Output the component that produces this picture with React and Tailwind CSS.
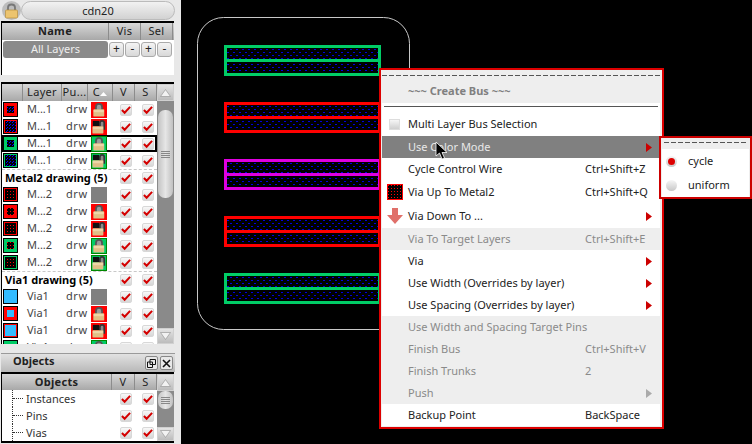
import React from 'react';

const RED = '#ff0000';
const GREEN = '#00cc66';
const VIA = '#33bbff';

// Layer colour chip: small = inset square, full = thin ring round the fill
const Swatch = ({ color, kind, fill }) => {
  if (!kind) {
    return (
      <svg width="15" height="15" className="block shrink-0">
        <rect width="15" height="15" fill="#000" />
        <rect x="1" y="1" width="13" height="13" fill={color} />
      </svg>
    );
  }
  const inset = kind === 'small' ? 4 : 2;
  const size = 15 - inset * 2;
  return (
    <svg width="15" height="15" className="block shrink-0" shapeRendering="crispEdges">
      <rect width="15" height="15" fill="#000" />
      <rect x="1" y="1" width="13" height="13" fill={color} />
      <rect x={inset} y={inset} width={size} height={size} fill={fill} />
    </svg>
  );
};

const LockIcon = ({ open }) => (
  <svg width="14" height="14" viewBox="0 0 16 16" className="block">
    {open && <rect x="1" y="1" width="7" height="6" fill="#111" />}
    {open ? (
      <path d="M9 8V3.500C9 2 10 1 11.500 1S14 2 14 3.500V11" fill="#8a8a8a" stroke="#333" strokeWidth="2" />
    ) : (
      <path d="M4.500 8V4.500C4.500 2.500 6 1 8 1s3.500 1.500 3.500 3.500V8" fill="#9a9a9a" stroke="#555" strokeWidth="2" />
    )}
    <rect x={open ? 0.5 : 1.5} y="7" width="12.500" height="8.500" rx="1" fill="#e0bf86" />
    <rect x={open ? 1 : 2} y="8" width="11.500" height="2.500" fill="#edd6a8" />
  </svg>
);

const ColorCell = ({ bg, edge, open, blank }) => {
  if (blank) return <div className="w-4 h-4 bg-[#808080]" />;
  return (
    <div className={`w-4 h-4 border flex items-center justify-center ${edge} ${bg}`}>
      <LockIcon open={open} />
    </div>
  );
};

const Check = () => (
  <div className="w-3 h-3 bg-linear-to-b from-[#f8f8f8] to-[#d6d6d6] border border-[#d8d8d8] rounded-[2px] flex items-center justify-center">
    <svg width="11" height="10" viewBox="0 0 11 10" className="block">
      <path d="M1 5l3 3 6-6.500" fill="none" stroke="#d40000" strokeWidth="2.200" />
    </svg>
  </div>
);

const HeadCell = ({ w, bold, children }) => (
  <div
    className={`h-full shrink-0 flex items-center justify-center border-r border-[#8c8c8c] text-[11px] tracking-[0.3px] text-[#222] ${bold ? 'font-bold' : ''}`}
    style={{ width: w }}
  >
    {children}
  </div>
);

const ScrollBtn = ({ up, h = 'h-[17px]' }) => (
  <div className={`${h} shrink-0 bg-linear-to-b from-[#e4e4e4] to-[#bcbcbc] border border-[#d0d0d0] flex items-center justify-center`}>
    <svg width="11" height="8" viewBox="0 0 11 8" className="block">
      <path d={up ? 'M5.500 0.500L10.500 7.500H0.500Z' : 'M0.500 0.500H10.500L5.500 7.500Z'} fill="#f2f2f2" stroke="#999" strokeWidth="0.700" />
    </svg>
  </div>
);

const Grip = () => (
  <div className="flex flex-col gap-px w-[9px]">
    <div className="h-px bg-[#888]" />
    <div className="h-px bg-[#888]" />
    <div className="h-px bg-[#888]" />
    <div className="h-px bg-[#888]" />
  </div>
);

const Scrollbar = ({ padTop, thumb, downH }) => (
  <div className="w-[17px] shrink-0 flex flex-col bg-[#8a8a8a]">
    <ScrollBtn up />
    <div className="flex-1 px-px" style={{ paddingTop: padTop }}>
      <div
        className="rounded-[7px] bg-linear-to-r from-[#c4c4c4] via-[#e6e6e6] to-[#c0c0c0] flex items-center justify-center"
        style={{ height: thumb }}
      >
        <Grip />
      </div>
    </div>
    <ScrollBtn h={downH} />
  </div>
);

const layerRow = (name, swatch, cell, selected) => ({ name, swatch, cell, selected });

const blueDots = 'url(#dotsBlue)';
const redDots = 'url(#dotsRed)';

const layerRows = [
  layerRow('M...1', { color: RED, kind: 'small', fill: blueDots }, { bg: 'bg-[#ff0000]', edge: 'border-[#ff0000]' }),
  layerRow('M...1', { color: RED, kind: 'full', fill: blueDots }, { bg: 'bg-[#ff0000]', edge: 'border-[#ff0000]', open: true }),
  layerRow('M...1', { color: GREEN, kind: 'small', fill: blueDots }, { bg: 'bg-[#00cc66]', edge: 'border-[#008800]' }, true),
  layerRow('M...1', { color: GREEN, kind: 'full', fill: blueDots }, { bg: 'bg-[#00cc66]', edge: 'border-[#008800]', open: true }),
  { group: 'Metal2 drawing (5)' },
  layerRow('M...2', { color: RED, kind: 'full', fill: redDots }, { blank: true }),
  layerRow('M...2', { color: RED, kind: 'small', fill: redDots }, { bg: 'bg-[#ff0000]', edge: 'border-[#ff0000]' }),
  layerRow('M...2', { color: RED, kind: 'full', fill: redDots }, { bg: 'bg-[#ff0000]', edge: 'border-[#ff0000]', open: true }),
  layerRow('M...2', { color: GREEN, kind: 'small', fill: redDots }, { bg: 'bg-[#00cc66]', edge: 'border-[#008800]' }),
  layerRow('M...2', { color: GREEN, kind: 'full', fill: redDots }, { bg: 'bg-[#00cc66]', edge: 'border-[#008800]', open: true }),
  { group: 'Via1 drawing (5)' },
  layerRow('Via1', { color: VIA }, { blank: true }),
  layerRow('Via1', { color: RED, kind: 'small', fill: VIA }, { bg: 'bg-[#ff0000]', edge: 'border-[#ff0000]' }),
  layerRow('Via1', { color: RED, kind: 'full', fill: VIA }, { bg: 'bg-[#ff0000]', edge: 'border-[#ff0000]', open: true }),
  layerRow('Via1', { color: GREEN, kind: 'small', fill: VIA }, { bg: 'bg-[#00cc66]', edge: 'border-[#008800]' }),
];

const LayerPanel = () => (
  <div className="mt-[7px] ml-px w-[173px] h-[262px] border-t-2 border-l border-black flex overflow-hidden bg-white">
    <div className="w-[155px] shrink-0 flex flex-col">
      <div className="h-[17px] shrink-0 flex bg-linear-to-b from-[#d8d8d8] to-[#a8a8a8]">
        <HeadCell w={21} />
        <HeadCell w={39}>Layer</HeadCell>
        <HeadCell w={26}>Pu...</HeadCell>
        <HeadCell w={25}>
          <span>C</span>
          <svg width="7" height="4" viewBox="0 0 7 4" className="block mt-[3px]">
            <path d="M3.500 0L7 4H0Z" fill="#fff" />
          </svg>
        </HeadCell>
        <HeadCell w={22}>V</HeadCell>
        <HeadCell w={22}>S</HeadCell>
      </div>
      {layerRows.map((row, i) =>
        row.group ? (
          <div key={i} className="h-[17px] shrink-0 flex items-center border-t border-dashed border-[#c8c8c8]">
            <div className="w-[118px] shrink-0 pl-[3px] text-[11px] font-bold text-black whitespace-nowrap">{row.group}</div>
            <div className="w-[22px] shrink-0"><Check /></div>
            <div className="w-[14px] shrink-0"><Check /></div>
          </div>
        ) : (
          <div
            key={i}
            className={`h-[17px] shrink-0 flex items-center text-[11px] text-[#444] ${row.selected ? 'shadow-[inset_0_0_0_2px_#000]' : ''}`}
          >
            <div className="w-[25px] shrink-0 pl-px"><Swatch {...row.swatch} /></div>
            <div className="w-[39px] shrink-0">{row.name}</div>
            <div className="w-[25px] shrink-0 tracking-[0.6px]">drw</div>
            <div className="w-[29px] shrink-0"><ColorCell {...row.cell} /></div>
            <div className="w-[22px] shrink-0"><Check /></div>
            <div className="w-[14px] shrink-0"><Check /></div>
          </div>
        )
      )}
    </div>
    <Scrollbar padTop={9} thumb={88} downH="h-[16px]" />
  </div>
);

const objectRows = ['Instances', 'Pins', 'Vias'];

const ObjectsPanel = () => (
  <div className="mt-[9px] flex flex-col">
    <div className="h-[19px] ml-px w-[174px] pr-[2px] flex items-center bg-linear-to-b from-[#e2e2e2] to-[#b8b8b8] border-t border-[#9a9a9a] text-[11px] font-bold text-[#222]">
      <span className="ml-3 flex-1 pb-[3px]">Objects</span>
      <div className="w-[13px] h-[14px] border border-[#888] rounded-[2px] bg-[#e8e8e8] flex items-center justify-center">
        <svg width="9" height="9" viewBox="0 0 9 9" className="block">
          <path d="M3 .5h5.500v5H3zM.5 3h5v5.500h-5z" fill="#e8e8e8" stroke="#111" />
        </svg>
      </div>
      <div className="ml-[2px] w-[13px] h-[14px] border border-[#888] rounded-[2px] bg-[#e8e8e8] flex items-center justify-center">
        <svg width="9" height="9" viewBox="0 0 9 9" className="block">
          <path d="M1 1l7 7M8 1L1 8" stroke="#111" strokeWidth="1.600" />
        </svg>
      </div>
    </div>
    <div className="ml-px w-[173px] h-[71px] border-y-2 border-l border-black flex bg-white overflow-hidden">
      <div className="w-[155px] shrink-0 flex flex-col">
        <div className="h-[16px] shrink-0 flex bg-linear-to-b from-[#d8d8d8] to-[#a8a8a8]">
          <HeadCell w={110} bold>Objects</HeadCell>
          <HeadCell w={23}>V</HeadCell>
          <HeadCell w={22}>S</HeadCell>
        </div>
        {objectRows.map((name) => (
          <div key={name} className="h-[17px] shrink-0 flex items-center text-[11px] text-[#333]">
            <div className="w-[24px] h-full shrink-0 pl-[10px]">
              <div className="h-full flex items-center border-l border-dotted border-[#333]">
                <div className="w-[10px] border-t border-dotted border-[#333]" />
              </div>
            </div>
            <div className="w-[94px] shrink-0 pt-[2px]">{name}</div>
            <div className="w-[22px] shrink-0"><Check /></div>
            <div className="w-[14px] shrink-0"><Check /></div>
          </div>
        ))}
      </div>
      <Scrollbar padTop={0} thumb={18} downH="h-[14px]" />
    </div>
  </div>
);

const TopPanel = () => (
  <>
    <div className="h-[21px] flex items-center pl-[2px]">
      <div className="w-[19px] h-[19px] rounded-full bg-[#bdbdbd] flex items-center justify-center">
        <svg width="15" height="16" viewBox="0 0 15 16" className="block">
          <path d="M4 8V4.500C4 2.800 5.500 1.500 7.500 1.500S11 2.800 11 4.500V8" fill="none" stroke="#777" strokeWidth="1.800" />
          <rect x="1.500" y="7" width="12" height="8" rx="1" fill="#ecc46f" stroke="#b98f3c" strokeWidth="0.700" />
        </svg>
      </div>
      <div className="w-[154px] h-[19px] rounded-full border border-[#bbb] bg-linear-to-b from-[#f2f2f2] to-[#d2d2d2] text-center text-[11px] leading-[17px] text-[#222]">
        cdn20
      </div>
    </div>
    <div className="ml-px w-[173px] h-[54px] border-t-2 border-l border-black bg-white flex flex-col">
      <div className="h-[17px] shrink-0 flex bg-linear-to-b from-[#d8d8d8] to-[#a8a8a8]">
        <HeadCell w={107} bold>Name</HeadCell>
        <HeadCell w={32}>Vis</HeadCell>
        <HeadCell w={32}>Sel</HeadCell>
      </div>
      <div className="h-[18px] flex items-center pl-px gap-px">
        <div className="w-[105px] h-[17px] rounded-[3px] bg-[#8a8a8a] text-center text-[11px] leading-[16px] text-[#eee]">
          All Layers
        </div>
        {['+', '-', '+', '-'].map((s, i) => (
          <div
            key={i}
            className="w-[15px] h-[15px] rounded-[3px] border border-[#aaa] bg-linear-to-b from-[#f4f4f4] to-[#d8d8d8] flex items-center justify-center text-[12px] leading-none text-[#222]"
          >
            {s}
          </div>
        ))}
      </div>
    </div>
  </>
);

// y of each wire on the canvas, relative to the window
const wires = [
  { y: 45, color: GREEN },
  { y: 102, color: RED },
  { y: 159, color: '#e000e0' },
  { y: 216, color: RED },
  { y: 273, color: GREEN },
];

const Canvas = () => (
  <svg width="571" height="444" className="block" shapeRendering="crispEdges">
    <defs>
      <pattern id="dotsBlue" width="3" height="3" patternUnits="userSpaceOnUse">
        <rect width="3" height="3" fill="#000" />
        <rect x="0" y="0" width="1" height="1" fill="#0000ff" />
        <rect x="1" y="2" width="1" height="1" fill="#0000ff" />
      </pattern>
      <pattern id="dotsRed" width="3" height="3" patternUnits="userSpaceOnUse">
        <rect width="3" height="3" fill="#000" />
        <rect x="1" y="1" width="1" height="1" fill="#ff0000" />
      </pattern>
      <pattern id="wireDots" width="6" height="6" patternUnits="userSpaceOnUse">
        <rect width="6" height="6" fill="#000" />
        <rect x="1" y="1" width="2" height="1" fill="#0000e0" />
        <rect x="4" y="4" width="2" height="1" fill="#0000e0" />
      </pattern>
    </defs>
    <rect x="16.500" y="17.500" width="212" height="312" rx="26" fill="none" stroke="#c8c8c8" shapeRendering="auto" />
    {wires.map((w) => (
      <g key={w.y}>
        <rect x="43" y={w.y} width="157" height="31" fill={w.color} />
        <rect x="46" y={w.y + 3} width="151" height="11" fill="url(#wireDots)" />
        <rect x="46" y={w.y + 17} width="151" height="11" fill="url(#wireDots)" />
      </g>
    ))}
  </svg>
);

const Dashes = ({ className }) => (
  <div className={`h-px bg-[repeating-linear-gradient(90deg,#555_0,#555_5px,transparent_5px,transparent_7px)] ${className}`} />
);

const Arrow = ({ color = '#cc0000' }) => (
  <svg width="6" height="9" viewBox="0 0 6 9" className="block">
    <path d="M0 0L6 4.500L0 9Z" fill={color} />
  </svg>
);

const MenuBox = () => (
  <div className="w-[11px] h-[11px] bg-linear-to-b from-[#f6f6f6] to-[#cfcfcf] border border-[#ddd]" />
);

const ViaUpIcon = () => (
  <svg width="16" height="16" className="block" shapeRendering="crispEdges">
    <rect width="16" height="16" fill={RED} />
    <rect x="1" y="1" width="14" height="14" fill="url(#dotsRed)" />
  </svg>
);

const ViaDownIcon = () => (
  <svg width="16" height="16" viewBox="0 0 16 16" className="block">
    <path d="M5 0H11V7H16L8 16L0 7H5Z" fill="#e0706a" />
  </svg>
);

const menuItems = [
  { label: 'Multi Layer Bus Selection', icon: <MenuBox />, cls: 'pb-[2px]' },
  { label: 'Use Color Mode', active: true, sub: true },
  { label: 'Cycle Control Wire', key2: 'Ctrl+Shift+Z' },
  { label: 'Via Up To Metal2', key2: 'Ctrl+Shift+Q', icon: <ViaUpIcon />, h: 'h-6' },
  { label: 'Via Down To ...', icon: <ViaDownIcon />, sub: true, h: 'h-6' },
  { label: 'Via To Target Layers', key2: 'Ctrl+Shift+E', off: true },
  { label: 'Via', sub: true },
  { label: 'Use Width (Overrides by layer)', sub: true },
  { label: 'Use Spacing (Overrides by layer)', sub: true },
  { label: 'Use Width and Spacing Target Pins', off: true },
  { label: 'Finish Bus', key2: 'Ctrl+Shift+V', off: true },
  { label: 'Finish Trunks', key2: '2', off: true },
  { label: 'Push', off: true, sub: true },
  { label: 'Backup Point', key2: 'BackSpace' },
];

const itemTone = (item) => {
  if (item.active) return 'bg-[#808080] text-[#e8e8e8]';
  if (item.off) return 'bg-[#eeeeee] text-[#8a8a8a]';
  return 'bg-white text-[#222]';
};

const ContextMenu = () => (
  <div className="absolute left-[379px] top-[68px] w-[285px] h-[361px] border-2 border-[#dd0000] bg-[#eeeeee] pl-px pr-[2px] pb-px flex flex-col text-[11px]">
    <div className="h-[10px] shrink-0 flex items-center">
      <Dashes className="w-full" />
    </div>
    <div className="h-[23px] shrink-0 flex items-center pl-[26px] font-bold text-[#808080]">~~~ Create Bus ~~~</div>
    <div className="h-[11px] shrink-0 bg-white pt-[3px] px-[2px]">
      <div className="h-px bg-[#555]" />
    </div>
    {menuItems.map((item) => (
      <div key={item.label} className={`${item.h || 'h-[22px]'} shrink-0 flex items-center ${item.cls || ''} ${itemTone(item)}`}>
        <div className="w-[26px] shrink-0 flex items-center justify-center pr-px">{item.icon}</div>
        <div className="w-[177px] shrink-0 whitespace-nowrap">{item.label}</div>
        <div className="w-[61px] shrink-0 whitespace-nowrap">{item.key2}</div>
        {item.sub && <Arrow color={item.off ? '#aaaaaa' : '#cc0000'} />}
      </div>
    ))}
  </div>
);

const SubMenu = () => (
  <div className="absolute left-[659px] top-[136px] w-[93px] h-[63px] border-2 border-[#cc0000] bg-[#eeeeee] flex flex-col text-[11px] text-[#222] p-px">
    <div className="h-[10px] shrink-0 pt-[3px] px-[2px]">
      <Dashes className="w-full" />
    </div>
    {[
      { label: 'cycle', on: true },
      { label: 'uniform' },
    ].map((o) => (
      <div key={o.label} className="h-6 shrink-0 bg-white flex items-center pl-[4px] gap-[6px]">
        <div className="w-[11px] h-[11px] rounded-full bg-linear-to-b from-[#f6f6f6] to-[#c8c8c8] flex items-center justify-center">
          {o.on && <div className="w-[7px] h-[7px] rounded-full bg-[#dd0000]" />}
        </div>
        <span className="ml-[5px]">{o.label}</span>
      </div>
    ))}
  </div>
);

const Cursor = () => (
  <svg width="13" height="19" viewBox="0 0 13 19" className="absolute left-[435px] top-[141px] block">
    <path d="M1 1V15L4.500 12L7 18L9.500 17L7 11.500H12Z" fill="#000" stroke="#fff" strokeWidth="0.800" />
  </svg>
);

export default function App() {
  return (
    <div className="relative w-[752px] h-[444px] overflow-hidden flex bg-black font-['Noto_Sans',sans-serif]">
      <div className="w-[181px] shrink-0 h-full bg-[#e8e8e8] flex flex-col">
        <TopPanel />
        <LayerPanel />
        <ObjectsPanel />
      </div>
      <div className="flex-1 h-full">
        <Canvas />
      </div>
      <ContextMenu />
      <SubMenu />
      <Cursor />
    </div>
  );
}
